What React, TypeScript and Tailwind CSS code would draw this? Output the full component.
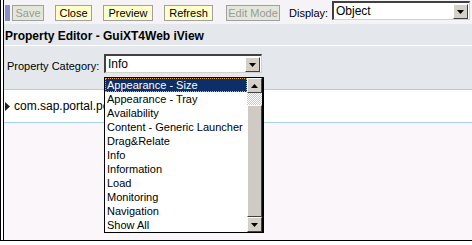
import React from "react";

const items = [
    "Appearance - Size",
    "Appearance - Tray",
    "Availability",
    "Content - Generic Launcher",
    "Drag&Relate",
    "Info",
    "Information",
    "Load",
    "Monitoring",
    "Navigation",
    "Show All",
];

function DownArrow() {
    return (
        <svg width="7" height="4" viewBox="0 0 7 4">
            <path d="M0 0h7L3.5 4z" fill="#000" />
        </svg>
    );
}

function UpArrow() {
    return (
        <svg width="7" height="4" viewBox="0 0 7 4">
            <path d="M0 4h7L3.5 0z" fill="#000" />
        </svg>
    );
}

function ArrowButton({ up }: { up?: boolean }) {
    return (
        <div className="w-[15px] h-[15px] bg-[#d4d0c8] border border-t-white border-l-white border-r-[#404040] border-b-[#404040] flex items-center justify-center shrink-0">
            {up ? <UpArrow /> : <DownArrow />}
        </div>
    );
}

function Select({ value, width }: { value: string; width: string }) {
    return (
        <div className={`${width} h-[19px] shrink-0 flex bg-white border-t-2 border-l-2 border-t-[#404040] border-l-[#404040] border-r border-b border-r-[#d4d0c8] border-b-[#d4d0c8]`}>
            <div className="flex-1 pl-[2px] leading-[16px] text-[12px] text-black">{value}</div>
            <div className="pt-[1px] pr-[1px]">
                <ArrowButton />
            </div>
        </div>
    );
}

function Button({ label, width, disabled }: { label: string; width: string; disabled?: boolean }) {
    return (
        <div
            className={`${width} h-[16px] border border-[#a0a0a0] flex items-center justify-center leading-none text-[11px] ${disabled ? "bg-[#e3e7da] text-[#9a9a9a]" : "bg-[#ffffcc] text-black"}`}
        >
            {label}
        </div>
    );
}

export default function App() {
    return (
        <div
            className="relative w-[472px] h-[245px] bg-white overflow-hidden"
            style={{ fontFamily: '"Liberation Sans", Arial, sans-serif' }}
        >
            <div className="h-[241px] border-l border-b border-black pl-[2px] flex">
                <div className="flex-1 border-l border-black flex flex-col">
                    {/* toolbar */}
                    <div className="h-[24px] bg-[#f6f3f6] flex items-start pt-[1px]">
                        <div className="mt-[4px] ml-[1px] w-[5px] h-[16px] bg-[#8c8cc8]" />
                        <div className="mt-[4px] ml-[2px] flex">
                            <Button label="Save" width="w-[32px]" disabled />
                            <div className="ml-[11px]"><Button label="Close" width="w-[37px]" /></div>
                            <div className="ml-[11px]"><Button label="Preview" width="w-[50px]" /></div>
                            <div className="ml-[11px]"><Button label="Refresh" width="w-[49px]" /></div>
                            <div className="ml-[13px]"><Button label="Edit Mode" width="w-[54px]" disabled /></div>
                        </div>
                        <div className="ml-[9px] mt-[5px] w-[43px] text-[11px] leading-[14px] text-black whitespace-nowrap">Display:</div>
                        <Select value="Object" width="w-[138px]" />
                    </div>
                    {/* header */}
                    <div className="h-[22px] bg-[#e4e8ec] flex items-center pt-[3px] pl-[1px] font-bold text-[12px] text-black border-b border-white">
                        Property Editor - GuiXT4Web iView
                    </div>
                    {/* category */}
                    <div className="h-[43px] bg-[#e4e8ec] flex items-start pt-[8px] pl-[3px]">
                        <div className="mt-[5px] text-[11px] leading-[14px] text-black w-[97px] shrink-0 whitespace-nowrap">Property Category:</div>
                        <Select value="Info" width="w-[158px]" />
                    </div>
                    <div className="h-[34px] bg-white border-t border-b border-[#a6cff2] flex items-center pl-[1px] text-[12px] text-black whitespace-nowrap">
                        <svg width="5" height="9" viewBox="0 0 5 9" className="mr-[4px] shrink-0">
                            <path d="M0 0l5 4.5L0 9z" fill="#202020" />
                        </svg>
                        <span>com.sap.portal.pc</span>
                    </div>
                    <div className="flex-1 bg-[#faf6fa]" />
                </div>
            </div>

            {/* open dropdown list */}
            <div className="absolute left-[104px] top-[77px] w-[160px] h-[156px] bg-white border border-black border-r-2 flex">
                <div className="flex-1 min-w-0 flex flex-col overflow-hidden">
                    {items.map((it, i) => (
                        <div
                            key={it}
                            className={`h-[14px] leading-[14px] pl-[2px] text-[11px] whitespace-nowrap ${i === 0 ? "bg-[#0b2f66] text-white outline outline-1 outline-dotted outline-[#e8a848] -outline-offset-1" : "text-black"}`}
                        >
                            {it}
                        </div>
                    ))}
                </div>
                <div className="w-[15px] shrink-0 flex flex-col">
                    <ArrowButton up />
                    <div className="h-[12px] shrink-0 bg-[repeating-conic-gradient(#c8c8c8_0_25%,#ffffff_0_50%)] bg-[length:2px_2px]" />
                    <div className="h-[112px] shrink-0 bg-[#cfcbc4] border border-t-white border-l-white border-r-[#404040] border-b-[#404040]" />
                    <ArrowButton />
                </div>
            </div>
        </div>
    );
}
